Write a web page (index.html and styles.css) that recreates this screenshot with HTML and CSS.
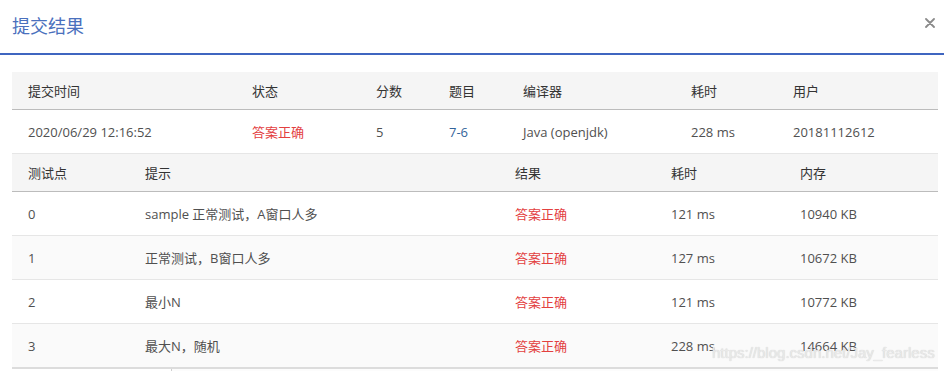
FILE: index.html
```html
<!DOCTYPE html>
<html lang="zh-CN">
<head>
<meta charset="utf-8">
<title>提交结果</title>
<link rel="stylesheet" href="styles.css">
</head>
<body>
<div class="modal">
  <div class="modal-header">
    <h2 class="modal-title">提交结果</h2>
    <span class="close" aria-label="close">
      <svg width="10" height="10" viewBox="0 0 10 10"><path d="M1 1 L9 9 M9 1 L1 9" stroke="#8a8a8a" stroke-width="1.8" stroke-linecap="round" fill="none"/></svg>
    </span>
  </div>
  <div class="modal-body">
    <table class="grid summary">
      <colgroup>
        <col class="c224"><col class="c124"><col class="c73"><col class="c74"><col class="c168"><col class="c102"><col>
      </colgroup>
      <thead>
        <tr><th>提交时间</th><th>状态</th><th>分数</th><th>题目</th><th>编译器</th><th>耗时</th><th>用户</th></tr>
      </thead>
      <tbody>
        <tr><td>2020/06/29 12:16:52</td><td class="ok">答案正确</td><td>5</td><td class="link">7-6</td><td>Java (openjdk)</td><td>228 ms</td><td>20181112612</td></tr>
      </tbody>
    </table>
    <table class="grid cases">
      <colgroup>
        <col class="c117"><col class="c370"><col class="c156"><col class="c129"><col>
      </colgroup>
      <thead>
        <tr><th>测试点</th><th>提示</th><th>结果</th><th>耗时</th><th>内存</th></tr>
      </thead>
      <tbody>
        <tr><td>0</td><td>sample 正常测试，A窗口人多</td><td class="ok">答案正确</td><td>121 ms</td><td>10940 KB</td></tr>
        <tr><td>1</td><td>正常测试，B窗口人多</td><td class="ok">答案正确</td><td>127 ms</td><td>10672 KB</td></tr>
        <tr><td>2</td><td>最小N</td><td class="ok">答案正确</td><td>121 ms</td><td>10772 KB</td></tr>
        <tr><td>3</td><td>最大N，随机</td><td class="ok">答案正确</td><td>228 ms</td><td>14664 KB</td></tr>
      </tbody>
    </table>
    <div class="code-edge"></div>
  </div>
  <div class="watermark">https://blog.csdn.net/Jay_fearless</div>
</div>
</body>
</html>
```
FILE: styles.css
```css
html, body {
  margin: 0;
  padding: 0;
  background: #fff;
}
body {
  font-family: "Open Sans", "Noto Sans CJK SC", sans-serif;
  font-size: 13px;
  color: #505050;
}
.modal {
  position: relative;
  width: 944px;
  height: 371px;
  overflow: hidden;
}
.modal-header {
  display: flex;
  align-items: center;
  justify-content: space-between;
  padding: 0 9px 0 12px;
  box-sizing: border-box;
  height: 55px;
  border-bottom: 2px solid #3f65c0;
}
.modal-title {
  margin: -3px 0 0 0;
  font-size: 18px;
  font-weight: normal;
  color: #4a70bd;
  font-family: "Noto Sans CJK SC", sans-serif;
  line-height: 1;
}
.close {
  display: flex;
  margin-top: -7px;
}
.modal-body {
  padding: 17px 6px 0 12px;
}
.grid {
  width: 926px;
  border-collapse: collapse;
  table-layout: fixed;
}
.grid th {
  background: #f5f5f5;
  color: #333;
  font-weight: normal;
  text-align: left;
  height: 37px;
  padding: 0 0 0 16px;
  border-bottom: 1px solid #bcbcbc;
  font-family: "Noto Sans CJK SC", sans-serif;
}
.grid td {
  padding: 0 0 0 16px;
  border-bottom: 1px solid #e6e6e6;
  white-space: nowrap;
}
.summary td {
  height: 43px;
}
.cases td {
  height: 43px;
}
.cases tbody tr:nth-child(even) td {
  background: #fafafa;
}
.cases tbody tr:last-child td {
  border-bottom: 2px solid #dcdcdc;
}
.ok {
  color: #e3403f;
}
.link {
  color: #33639a;
}
.c224 { width: 224px; }
.c124 { width: 124px; }
.c73 { width: 73px; }
.c74 { width: 74px; }
.c168 { width: 168px; }
.c102 { width: 102px; }
.c117 { width: 117px; }
.c370 { width: 370px; }
.c156 { width: 156px; }
.c129 { width: 129px; }
.code-edge {
  margin-left: 159px;
  height: 6px;
  border-left: 1px solid #cfcfcf;
  background: #fcfcfc;
}
.watermark {
  position: absolute;
  left: 712px;
  top: 344px;
  font-family: "Liberation Sans", Arial, sans-serif;
  font-size: 15px;
  color: #e9e9e9;
  text-shadow: 0 0 1px #c8c8c8;
  white-space: nowrap;
}
```
